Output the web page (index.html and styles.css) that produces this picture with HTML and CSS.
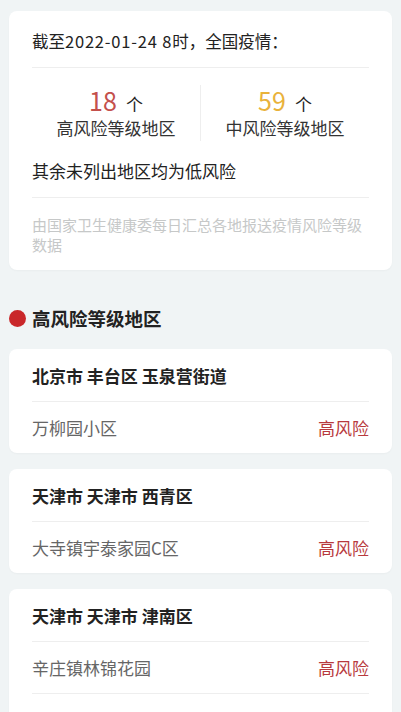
FILE: index.html
```html
<!DOCTYPE html>
<html lang="zh-CN">
<head>
	<meta charset="UTF-8">
	<meta name="viewport" content="width=device-width, initial-scale=1.0">
	<title>风险等级地区</title>
	<link rel="stylesheet" href="styles.css">
</head>
<body>
<div class="page">
	<div class="card summary">
		<div class="summary-title">截至<span class="date">2022-01-24 8</span>时，全国疫情：</div>
		<div class="stats">
			<div class="stat">
				<div class="stat-num"><span class="num high">18</span><span class="unit">个</span></div>
				<div class="stat-label">高风险等级地区</div>
			</div>
			<div class="stat">
				<div class="stat-num"><span class="num mid">59</span><span class="unit">个</span></div>
				<div class="stat-label">中风险等级地区</div>
			</div>
		</div>
		<div class="note">其余未列出地区均为低风险</div>
		<div class="source">由国家卫生健康委每日汇总各地报送疫情风险等级数据</div>
	</div>

	<h2 class="section-title"><span class="dot"></span>高风险等级地区</h2>

	<div class="card area">
		<div class="area-title">北京市 丰台区 玉泉营街道</div>
		<ul class="area-list">
			<li><span>万柳园小区</span><span class="risk">高风险</span></li>
		</ul>
	</div>
	<div class="card area">
		<div class="area-title">天津市 天津市 西青区</div>
		<ul class="area-list">
			<li><span>大寺镇宇泰家园C区</span><span class="risk">高风险</span></li>
		</ul>
	</div>
	<!-- 列表继续，下方内容在首屏之外 -->
	<div class="card area more">
		<div class="area-title">天津市 天津市 津南区</div>
		<ul class="area-list">
			<li><span>辛庄镇林锦花园</span><span class="risk">高风险</span></li>
		</ul>
	</div>
</div>
</body>
</html>
```

FILE: styles.css
```css
html, body {
	margin: 0;
	padding: 0;
	background: #f0f4f5;
	font-family: "Noto Sans CJK SC", "Noto Sans", sans-serif;
	color: #222;
}
.page {
	padding: 11px 9px 0;
}
.card {
	background: #fff;
	border-radius: 8px;
	padding: 0 23px;
	box-shadow: 0 1px 2px rgba(0, 0, 0, 0.03);
}
.summary-title {
	font-size: 16.5px;
	line-height: 24px;
	padding: 18px 0 14px;
	border-bottom: 1px solid #eeeeee;
}
.summary-title > .date {
	letter-spacing: 0.8px;
}
.stats {
	display: flex;
	padding-top: 17px;
}
.stats > .stat {
	flex: 1;
	text-align: center;
}
.stats > .stat:first-child {
	border-right: 1px solid #eeeeee;
}
.stat-num {
	height: 30px;
	line-height: 30px;
}
.stat-num > .num {
	font-size: 25px;
}
.stat-num > .num.high {
	color: #c4504c;
}
.stat-num > .num.mid {
	color: #e9b23b;
}
.stat-num > .unit {
	font-size: 17px;
	margin-left: 9px;
	color: #222;
}
.stat-label {
	font-size: 17px;
	line-height: 26px;
	color: #333;
}
.note {
	font-size: 17px;
	line-height: 24px;
	margin-top: 18px;
	padding-bottom: 14px;
	border-bottom: 1px solid #eeeeee;
}
.source {
	font-size: 15px;
	line-height: 20px;
	color: #c6c8c8;
	padding: 17px 0 15px;
}
.section-title {
	display: flex;
	align-items: center;
	margin: 34px 0 17px;
	font-size: 18.5px;
	line-height: 28px;
	font-weight: 700;
	color: #222;
}
.section-title > .dot {
	width: 17px;
	height: 17px;
	border-radius: 50%;
	background: #c9272a;
	margin-right: 6px;
}
.area {
	margin-bottom: 16px;
}
.area.more {
	padding-bottom: 40px;
}
.area-title {
	font-size: 17px;
	line-height: 24px;
	font-weight: 700;
	padding: 15px 0 13px;
	border-bottom: 1px solid #eeeeee;
}
.area-list {
	margin: 0;
	padding: 0;
	list-style: none;
}
.area-list > li {
	display: flex;
	justify-content: space-between;
	font-size: 17px;
	line-height: 24px;
	padding: 14px 0 13px;
	border-bottom: 1px solid #eeeeee;
	color: #666;
}
.area-list > li:last-child {
	border-bottom: none;
}
.area.more .area-list > li:last-child {
	border-bottom: 1px solid #eeeeee;
}
.area-list > li > .risk {
	color: #b8393d;
}
```
